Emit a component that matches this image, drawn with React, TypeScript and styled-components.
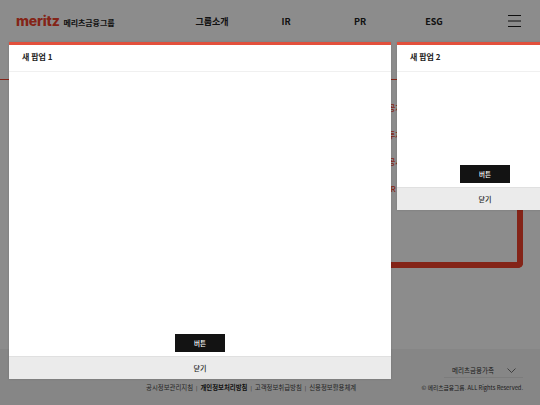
import React from "react";
import styled, { createGlobalStyle } from "styled-components";

const FONT = `"Noto Sans CJK KR", "Noto Sans", sans-serif`;

const GlobalStyle = createGlobalStyle`
  html, body {
    margin: 0;
    padding: 0;
    background: #fff;
    font-family: ${FONT};
  }
`;

const NAV_ITEMS = ["그룹소개", "IR", "PR", "ESG"];
const SIDE_LABELS = ["공지", "투자", "공시", "IR"];
const FOOTER_LINKS = [
  { label: "공시정보관리지침" },
  { label: "개인정보처리방침", strong: true },
  { label: "고객정보취급방침" },
  { label: "신용정보활용체계" },
];

const Popup = ({
  title,
  left,
  width,
  height,
}: {
  title: string;
  left: number;
  width: number;
  height: number;
}) => (
  <PopupBox $left={left} $width={width} $height={height}>
    <PopupTitle>{title}</PopupTitle>
    <PopupBody>
      <ActionButton>버튼</ActionButton>
    </PopupBody>
    <CloseBar>닫기</CloseBar>
  </PopupBox>
);

const App = () => (
  <Page>
    <GlobalStyle />
    <Header>
      <Brand>
        <LogoMark>meritz</LogoMark>
        <LogoText>메리츠금융그룹</LogoText>
      </Brand>
      <Nav>
        {NAV_ITEMS.map((item) => (
          <NavItem key={item}>{item}</NavItem>
        ))}
      </Nav>
      <Burger aria-label="menu">
        <svg width="13" height="12" viewBox="0 0 13 12" fill="none">
          <path d="M0 .5h13M0 6h13M0 11.5h13" stroke="#1c1c1c" strokeWidth="1" />
        </svg>
      </Burger>
    </Header>
    <Main>
      <ThinRule />
      <Labels>
        {SIDE_LABELS.map((label) => (
          <SideLabel key={label}>{label}</SideLabel>
        ))}
      </Labels>
      <Route />
    </Main>
    <Footer>
      <FamilyRow>
        <FamilySelect>
          <span>메리츠금융가족</span>
          <svg width="9" height="5" viewBox="0 0 9 5" fill="none">
            <path d="M.5.5l4 4 4-4" stroke="#3c3c3c" strokeWidth=".7" />
          </svg>
        </FamilySelect>
      </FamilyRow>
      <BottomRow>
        <Links>
          {FOOTER_LINKS.map((link, index) => (
            <React.Fragment key={link.label}>
              {index > 0 && <LinkDivider>|</LinkDivider>}
              <FooterLink $strong={link.strong}>{link.label}</FooterLink>
            </React.Fragment>
          ))}
        </Links>
        <Copyright>© 메리츠금융그룹. ALL Rights Reserved.</Copyright>
      </BottomRow>
    </Footer>
    <Dim />
    <Popup title="새 팝업 1" left={9} width={382} height={337} />
    <Popup title="새 팝업 2" left={397} width={176} height={168} />
  </Page>
);

export default App;

const Page = styled.div`
  position: relative;
  display: flex;
  flex-direction: column;
  width: 540px;
  height: 405px;
  overflow: hidden;
  background: #fff;
`;

const Header = styled.header`
  display: flex;
  align-items: center;
  flex: none;
  height: 42px;
  padding: 0 19px 0 16px;
`;

const Brand = styled.div`
  display: flex;
  align-items: center;
  gap: 4px;
  width: 159px;
  flex: none;
`;

const LogoMark = styled.span`
  font-family: "Inter", sans-serif;
  font-size: 14px;
  font-weight: 800;
  line-height: 1;
  letter-spacing: -0.2px;
  color: #f0432c;
`;

const LogoText = styled.span`
  margin-top: 2px;
  font-size: 8px;
  font-weight: 700;
  letter-spacing: -0.1px;
  color: #222;
`;

const Nav = styled.nav`
  display: flex;
  flex: 1;
`;

const NavItem = styled.a`
  width: 74px;
  text-align: center;
  font-size: 9px;
  font-weight: 700;
  color: #222;
`;

const Burger = styled.div`
  display: flex;
  flex: none;
  height: 12px;
`;

const Main = styled.main`
  position: relative;
  flex: 1;
`;

const ThinRule = styled.div`
  height: 1px;
  margin-top: 37px;
  background: #f0432c;
`;

const Labels = styled.div`
  display: flex;
  flex-direction: column;
  gap: 16px;
  margin: 22px 0 0 388px;
`;

const SideLabel = styled.span`
  font-size: 8px;
  font-weight: 500;
  line-height: 11px;
  color: #f0432c;
`;

const Route = styled.div`
  position: absolute;
  top: 120px;
  left: 300px;
  width: 223px;
  height: 106px;
  box-sizing: border-box;
  border-right: 6px solid #f0432c;
  border-bottom: 6px solid #f0432c;
  border-bottom-right-radius: 5px;
`;

const Footer = styled.footer`
  flex: none;
  box-sizing: border-box;
  height: 56px;
  padding: 10px 17px 0 0;
  background: #f4f4f4;
`;

const FamilyRow = styled.div`
  display: flex;
  justify-content: flex-end;
`;

const FamilySelect = styled.div`
  display: flex;
  align-items: center;
  justify-content: space-between;
  box-sizing: border-box;
  width: 79px;
  height: 19px;
  padding: 4px 7px 0 8px;
  border-bottom: 1px solid #e2e2e2;
  font-size: 6.5px;
  color: #333;
`;

const BottomRow = styled.div`
  display: flex;
  align-items: center;
  justify-content: space-between;
  margin-top: 5px;
  padding-left: 146px;
`;

const Links = styled.div`
  display: flex;
  align-items: center;
  gap: 3px;
`;

const FooterLink = styled.a<{ $strong?: boolean }>`
  font-size: 6.4px;
  font-weight: ${({ $strong }) => ($strong ? 700 : 400)};
  color: ${({ $strong }) => ($strong ? "#222" : "#444")};
`;

const LinkDivider = styled.span`
  font-size: 5px;
  color: #444;
`;

const Copyright = styled.span`
  font-size: 5.75px;
  color: #333;
`;

const Dim = styled.div`
  position: absolute;
  inset: 0;
  background: rgba(0, 0, 0, 0.45);
`;

const PopupBox = styled.section<{ $left: number; $width: number; $height: number }>`
  position: absolute;
  top: 42px;
  left: ${({ $left }) => $left}px;
  display: flex;
  flex-direction: column;
  box-sizing: border-box;
  width: ${({ $width }) => $width}px;
  height: ${({ $height }) => $height}px;
  border-top: 3px solid #e2503c;
  background: #fff;
  box-shadow: 0 0 2px rgba(0, 0, 0, 0.15);
`;

const PopupTitle = styled.h2`
  flex: none;
  box-sizing: border-box;
  height: 27px;
  margin: 0;
  padding: 0 13px;
  border-bottom: 1px solid #f0f0f0;
  font-size: 8px;
  font-weight: 700;
  line-height: 24px;
  color: #222;
`;

const PopupBody = styled.div`
  display: flex;
  flex: 1;
  align-items: flex-end;
  justify-content: center;
  padding-bottom: 4px;
`;

const ActionButton = styled.button`
  width: 50px;
  height: 18px;
  padding: 0;
  border: none;
  background: #131313;
  font-family: ${FONT};
  font-size: 6.5px;
  font-weight: 500;
  color: #fff;
`;

const CloseBar = styled.div`
  flex: none;
  box-sizing: border-box;
  height: 23px;
  border-top: 1px solid #e0e0e0;
  background: #ebebeb;
  text-align: center;
  font-size: 7px;
  font-weight: 500;
  line-height: 22px;
  color: #222;
`;
